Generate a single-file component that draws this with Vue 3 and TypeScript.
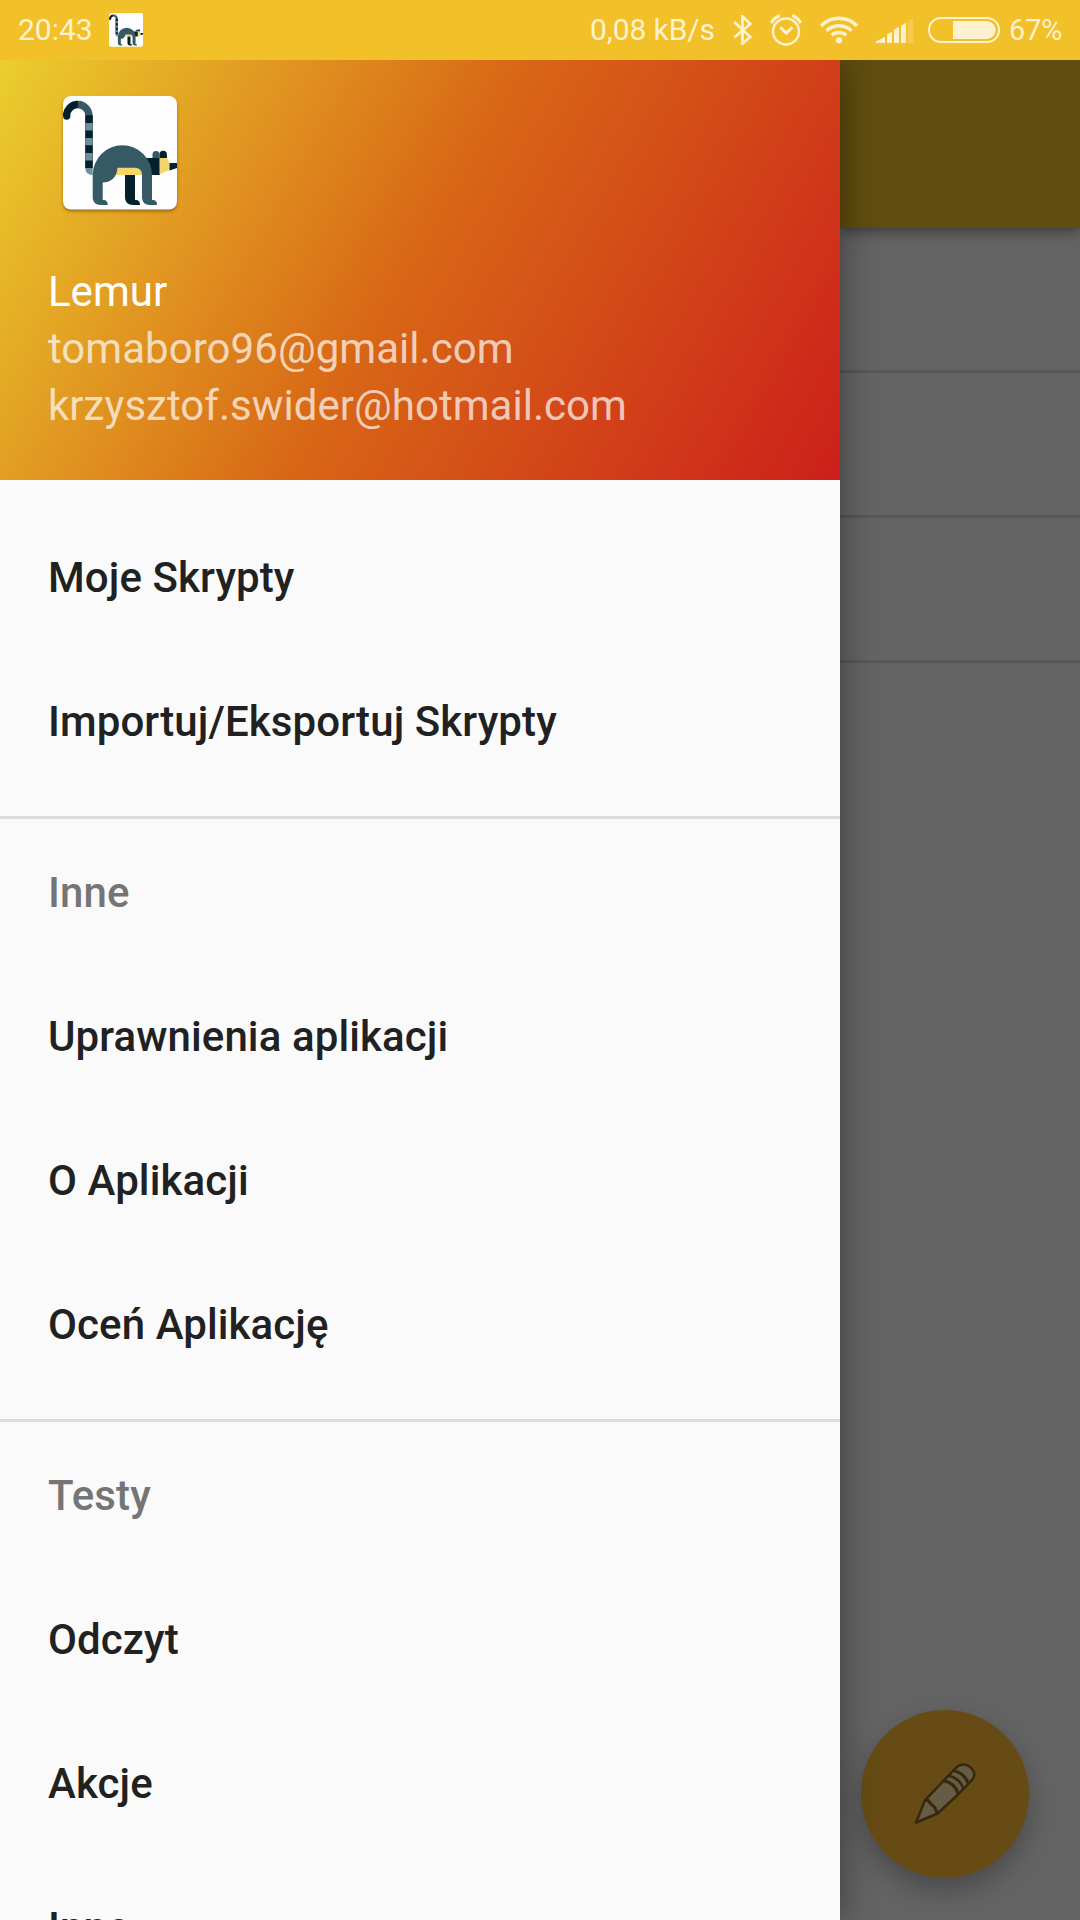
<script setup lang="ts">
interface MenuGroup {
  title?: string
  items: string[]
}

const groups: MenuGroup[] = [
  { items: ['Moje Skrypty', 'Importuj/Eksportuj Skrypty'] },
  { title: 'Inne', items: ['Uprawnienia aplikacji', 'O Aplikacji', 'Oceń Aplikację'] },
  { title: 'Testy', items: ['Odczyt', 'Akcje', 'Inne'] },
]
const emails: string[] = ['tomaboro96@gmail.com', 'krzysztof.swider@hotmail.com']
const scripts: number[] = [1, 2, 3]
</script>

<template>
  <div class="screen">
    <svg class="defs" width="0" height="0" aria-hidden="true">
      <defs>
        <clipPath id="tile"><rect x="13" y="11" width="114" height="113.500" rx="8" /></clipPath>
        <symbol id="lemur" viewBox="13 11 114 114">
          <rect x="13" y="11" width="114" height="113.500" rx="8" fill="#fdfdfe" />
          <g clip-path="url(#tile)">
            <path d="M39 83V31a11.300 11.300 0 0 0-11-11.500" fill="none" stroke="#355a66" stroke-width="7.300" />
            <path d="M28 19.500A11.300 11.300 0 0 0 16.500 31" fill="none" stroke="#04202c" stroke-width="7.300" />
            <circle cx="16.700" cy="31" r="3.650" fill="#04202c" />
            <path d="M35.300 30.300h7.400v53h-7.400z" fill="#04202c" />
            <path d="M35.300 38h7.400v7.500h-7.400zM35.300 53h7.400v7.300h-7.400zM35.300 68h7.400v7.500h-7.400z" fill="#6c909f" />
            <path d="M35.300 83h7.400v7q-7.400-.5-7.400-7Z" fill="#6c909f" />
            <path d="M75 89h10v26c4 0 5 2 5 5h-7c-5 0-8-3-8-8Z" fill="#04202c" />
            <path d="M93 73h17v17H93z" fill="#04202c" />
            <path d="M102.500 73v-3.500a3.500 3.500 0 0 1 7 0V73z" fill="#355a66" />
            <path d="M109.500 73v-3.500a3.700 3.700 0 0 1 7.400 0V73z" fill="#04202c" />
            <path d="M109.500 73h7.400l2.600 5v7l-10 4.500Z" fill="#f4d56c" />
            <path d="M119.500 78H127v5l-7.500 2.500Z" fill="#04202c" />
            <path d="M60 82h35v8H60z" fill="#f4d56c" />
            <path d="M42.700 90a29.600 29.600 0 0 1 59.300 0v25c4 0 5 2 5 5h-7c-5 0-8-3-8-8V90c0-5-3-7.300-7.300-7.300H67.500C67 93 60 97.500 52.700 97.500V115c4 0 5 2 5 5h-7c-5 0-8-3-8-8Z" fill="#355a66" />
          </g>
        </symbol>
      </defs>
    </svg>

    <header class="status">
      <span class="clock">20:43</span>
      <svg class="notice" width="34" height="34"><use href="#lemur" /></svg>
      <span class="speed">0,08 kB/s</span>
      <svg class="bluetooth" width="20" height="30" viewBox="0 0 20 30" fill="none" stroke="currentColor" stroke-width="2.800">
        <path d="m1.200 7 16 15-7.700 6.500v-27L17.200 9l-16 13.500" />
      </svg>
      <svg class="alarm" width="32" height="32" viewBox="0 0 32 32" fill="none" stroke="currentColor">
        <circle cx="16" cy="17.500" r="13" stroke-width="2.400" />
        <path d="m10.300 13.200 6 6 6-6" stroke-width="3" />
        <path d="M1.200 9Q4 4 9.800 1.500M30.800 9Q28 4 22.200 1.500" stroke-width="3.200" />
      </svg>
      <svg class="wifi" width="38" height="28" viewBox="0 0 38 28" fill="none" stroke="currentColor" stroke-width="3.500">
        <path d="M1 10a25 25 0 0 1 36 0M6.500 14.700a18 18 0 0 1 25 0M11.700 19.300a11 11 0 0 1 14.600 0" />
        <circle cx="19" cy="24.300" r="3.100" fill="currentColor" stroke="none" />
      </svg>
      <svg class="signal" width="38" height="26" viewBox="0 0 38 26" fill="currentColor">
        <path d="M0 26v-1.500l9-4.800V26zM11 26v-8.500l5-2.800V26zM18 26V12.800l5-3.100V26zM25 26V8.800l5-3.100V26z" />
        <path d="M32 26V4l5.300-3v25z" opacity=".22" />
      </svg>
      <svg class="battery" width="72" height="26" viewBox="0 0 72 26">
        <rect x="1" y="1" width="70" height="24" rx="12" fill="none" stroke="currentColor" stroke-width="2" />
        <path d="M25 4h33.700a9 9 0 0 1 0 18H25z" fill="currentColor" />
      </svg>
      <span class="percent">67%</span>
    </header>

    <div class="content">
      <nav class="drawer">
        <section class="account">
          <svg class="logo" width="114" height="114"><use href="#lemur" /></svg>
          <div class="name">Lemur</div>
          <div v-for="email in emails" :key="email" class="email">{{ email }}</div>
        </section>
        <div class="menu">
          <section v-for="(group, i) in groups" :key="i" class="group">
            <h2 v-if="group.title" class="row heading">{{ group.title }}</h2>
            <a v-for="item in group.items" :key="item" class="row">{{ item }}</a>
          </section>
        </div>
      </nav>

      <main class="page">
        <div class="toolbar"></div>
        <div v-for="script in scripts" :key="script" class="script"></div>
        <button class="fab" aria-label="Edytuj">
          <svg width="62" height="62" viewBox="0 0 62 62" fill="#665b45" stroke="#37270f" stroke-width="2.500" stroke-linejoin="round">
            <path d="M2 59.500 11 37.300 29.300 18 41.700 5Q47.500-.5 54 2.500 60.500 7 60.300 12 60 15 57 18L44.500 31 23.700 50.500Z" />
            <path d="m11 37.300 3.500.3 2 3 4.300 3.700 1 3 2 3" fill="none" stroke-width="3" />
            <path d="M29.300 17.500q12 2.500 15 13.500M39.500 7.500q12 3 15 14" fill="none" stroke-width="3" />
            <path d="M34 12.500q12.500 3 15.500 14" fill="none" />
          </svg>
        </button>
      </main>
    </div>
  </div>
</template>

<style>
body {
  margin: 0;
  overflow: hidden;
}
</style>

<style scoped>
.screen {
  width: 1080px;
  height: 1920px;
  display: flex;
  flex-direction: column;
  overflow: hidden;
  background: #646464;
  font-family: Roboto, "Noto Sans", sans-serif;
}
.defs {
  position: absolute;
}
.status {
  position: relative;
  z-index: 2;
  box-sizing: border-box;
  height: 60px;
  flex: none;
  display: flex;
  align-items: center;
  padding-left: 18px;
  background: #f2c029;
  color: #fdf1d0;
  font-size: 30px;
  line-height: 60px;
  white-space: nowrap;
}
.clock {
  width: 91px;
}
.speed {
  margin-left: auto;
  letter-spacing: -0.08px;
}
.bluetooth {
  margin-left: 18px;
}
.alarm {
  margin-left: 17px;
}
.wifi {
  margin-left: 18px;
}
.signal {
  margin-left: 18px;
}
.battery {
  margin-left: 14px;
}
.percent {
  width: 71px;
  margin-left: 9px;
  font-size: 28.800px;
}
.content {
  flex: 1;
  min-height: 0;
  display: flex;
}
.drawer {
  width: 840px;
  flex: none;
  z-index: 1;
  background: #fafafa;
  box-shadow: 0 0 34px rgba(0, 0, 0, 0.42);
}
.account {
  box-sizing: border-box;
  height: 420px;
  padding: 36px 48px 0;
  /* The gradient also spans the 60px behind the status bar. */
  background: linear-gradient(119.745deg, #ecd52f 0%, #d86716 50%, #cc1f1b 100%) bottom / 840px 480px no-repeat;
  color: #fff;
  font-size: 42px;
  line-height: 57px;
}
.logo {
  display: block;
  margin: 0 0 53px 15px;
  filter: drop-shadow(0 2px 1.500px rgba(90, 50, 0, 0.5));
}
.email {
  color: rgba(255, 255, 255, 0.7);
  letter-spacing: 0.04px;
}
.menu {
  padding-top: 24px;
}
.group + .group {
  margin-top: 24px;
  border-top: 3px solid #dcdcdc;
}
.row {
  box-sizing: border-box;
  height: 144px;
  margin: 0;
  padding: 3px 48px 0;
  display: flex;
  align-items: center;
  color: #212121;
  font-size: 42px;
  font-weight: 500;
  letter-spacing: 0.1px;
}
.heading {
  color: #757575;
}
.page {
  flex: 1;
  position: relative;
}
.toolbar {
  height: 168px;
  background: #614d10;
  box-shadow: 0 2px 14px rgba(0, 0, 0, 0.5);
}
.script {
  box-sizing: border-box;
  height: 145px;
  border-bottom: 3px solid #575757;
}
.fab {
  position: absolute;
  right: 51px;
  bottom: 42px;
  width: 168px;
  height: 168px;
  padding: 0;
  border: 0;
  border-radius: 50%;
  display: flex;
  align-items: center;
  justify-content: center;
  background: #664b14;
  box-shadow: 0 12px 28px rgba(0, 0, 0, 0.27);
}
</style>
